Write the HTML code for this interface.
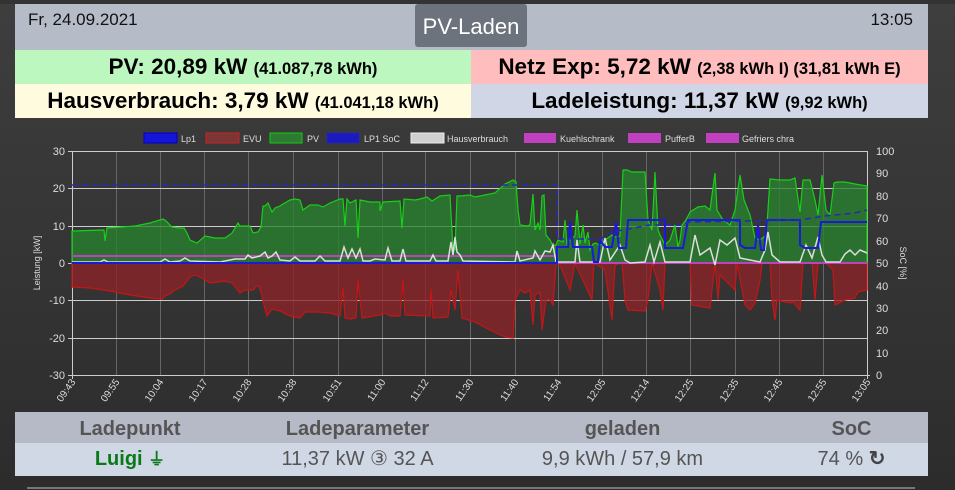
<!DOCTYPE html>
<html><head><meta charset="utf-8"><style>
*{margin:0;padding:0;box-sizing:border-box}
body{width:955px;height:490px;overflow:hidden;background:linear-gradient(#3e3e3e,#2c2c2c);font-family:"Liberation Sans",sans-serif;position:relative}
.top{position:absolute;left:0;top:0;width:955px;height:4px;background:#333}
.hdr{position:absolute;left:15px;top:4px;width:913px;height:46px;background:#b6bbc8}
.date{position:absolute;left:13px;top:6px;font-size:17px;color:#111}
.time{position:absolute;right:15px;top:6px;font-size:17px;color:#111}
.btn{position:absolute;left:400px;top:0;width:112px;height:43px;background:#6c737c;border-radius:3px;color:#fff;font-size:22px;text-align:center;line-height:46px}
.cell{position:absolute;height:34px;text-align:center;font-weight:bold;font-size:22.5px;line-height:34px;color:#000}
.cell small{font-size:16.5px}
.tbl{position:absolute;left:15px;width:913px;display:flex}
.tbl div{text-align:center}
</style></head><body>
<div class="top"></div>
<div class="hdr"><div class="date">Fr, 24.09.2021</div><div class="btn">PV-Laden</div><div class="time">13:05</div></div>
<div class="cell" style="left:15px;top:50px;width:456px;background:#bcf7bf">PV: 20,89 kW <small>(41.087,78 kWh)</small></div>
<div class="cell" style="left:471px;top:50px;width:457px;background:#ffbdbd">Netz Exp: 5,72 kW <small>(2,38 kWh I) (31,81 kWh E)</small></div>
<div class="cell" style="left:15px;top:84px;width:456px;height:34px;background:#fffbdf">Hausverbrauch: 3,79 kW <small>(41.041,18 kWh)</small></div>
<div class="cell" style="left:471px;top:84px;width:457px;height:34px;background:#d0d6e6">Ladeleistung: 11,37 kW <small>(9,92 kWh)</small></div>

<svg style="position:absolute;left:0;top:0" width="955" height="410" font-family="Liberation Sans, sans-serif">
<g font-size="9" fill="#ddd">
<rect x="144" y="133" width="33" height="10" fill="#1515d8" stroke="#00c" />
<text x="181" y="142">Lp1</text>
<rect x="206" y="133" width="33" height="10" fill="#7b3535" stroke="#c22"/>
<text x="243" y="142">EVU</text>
<rect x="270" y="133" width="32" height="10" fill="#2f7a33" stroke="#1c1"/>
<text x="307" y="142">PV</text>
<rect x="327" y="133" width="32" height="10" fill="#1a1ac0" stroke="#22c" stroke-dasharray="4 2"/>
<text x="364" y="142">LP1 SoC</text>
<rect x="411" y="133" width="33" height="10" fill="#d0d0d0" stroke="#eee"/>
<text x="447" y="142">Hausverbrauch</text>
<rect x="524" y="133" width="32" height="10" fill="#c040c0"/>
<text x="560" y="142">Kuehlschrank</text>
<rect x="628" y="133" width="33" height="10" fill="#c040c0"/>
<text x="665" y="142">PufferB</text>
<rect x="706" y="133" width="33" height="10" fill="#c040c0"/>
<text x="742" y="142">Gefriers chra</text>
</g>
<g stroke="#666" stroke-width="1">
<path d="M116.5,151V375M160.5,151V375M204.5,151V375M248.5,151V375M293.5,151V375M338.5,151V375M382.5,151V375M425.5,151V375M470.5,151V375M515.5,151V375M558.5,151V375M602.5,151V375M646.5,151V375M690.5,151V375M735.5,151V375M779.5,151V375M823.5,151V375"/>
</g>
<g stroke="#ccc" stroke-width="1">
<path d="M68,151.5H867M68,188.5H867M68,226.5H867M68,263.5H867M68,300.5H867M68,338.5H867M68,375.5H870M72.5,151V379M867.5,151V379"/>
</g>
<g font-size="11" fill="#ddd" text-anchor="end">
<text x="65" y="155">30</text><text x="65" y="192">20</text><text x="65" y="230">10</text><text x="65" y="267">0</text><text x="65" y="304">-10</text><text x="65" y="342">-20</text><text x="65" y="379">-30</text>
</g>
<g font-size="11" fill="#ddd">
<text x="876" y="155">100</text><text x="876" y="177">90</text><text x="876" y="200">80</text><text x="876" y="222">70</text><text x="876" y="245">60</text><text x="876" y="267">50</text><text x="876" y="290">40</text><text x="876" y="312">30</text><text x="876" y="334">20</text><text x="876" y="357">10</text><text x="876" y="379">0</text>
</g>
<text transform="translate(40,263) rotate(-90)" font-size="9" fill="#ddd" text-anchor="middle">Leistung [kW]</text>
<text transform="translate(900,263) rotate(90)" font-size="9" fill="#ddd" text-anchor="middle">SoC [%]</text>
<g font-size="10" fill="#ddd" text-anchor="end">
<text transform="translate(76,382) rotate(-55)">09:43</text>
<text transform="translate(120,382) rotate(-55)">09:55</text>
<text transform="translate(164,382) rotate(-55)">10:04</text>
<text transform="translate(208,382) rotate(-55)">10:17</text>
<text transform="translate(252,382) rotate(-55)">10:28</text>
<text transform="translate(297,382) rotate(-55)">10:38</text>
<text transform="translate(342,382) rotate(-55)">10:51</text>
<text transform="translate(386,382) rotate(-55)">11:00</text>
<text transform="translate(429,382) rotate(-55)">11:12</text>
<text transform="translate(474,382) rotate(-55)">11:30</text>
<text transform="translate(519,382) rotate(-55)">11:40</text>
<text transform="translate(562,382) rotate(-55)">11:54</text>
<text transform="translate(606,382) rotate(-55)">12:05</text>
<text transform="translate(650,382) rotate(-55)">12:14</text>
<text transform="translate(694,382) rotate(-55)">12:25</text>
<text transform="translate(739,382) rotate(-55)">12:35</text>
<text transform="translate(783,382) rotate(-55)">12:45</text>
<text transform="translate(827,382) rotate(-55)">12:55</text>
<text transform="translate(871,382) rotate(-55)">13:05</text>
</g>
<path fill="rgba(40,130,45,0.78)" stroke="#17d017" stroke-width="1.2" d="M72,231L104,230L105,241L107,228L135,226L150,223L163,219L166,221L172,227L180,228L184,228L187,233L190,240L197,243L205,236L215,238L225,238L232,233L238,223L240,226L250,226L253,233L258,232L261,227L263,206L265,206L268,203L272,212L275,208L280,206L283,204L290,200L295,199L300,200L303,210L310,205L318,205L323,207L330,203L340,199L343,199L345,226L347,199L350,203L356,200L358,238L360,200L370,202L380,202L380,211L383,202L400,201L402,228L404,199L415,200L420,199L427,197L432,201L440,196L450,195L453,250L455,250L457,196L460,196L470,195L475,197L495,193L505,184L513,180L516,182L518,210L520,225L527,226L530,225L533,194L535,230L538,223L540,230L542,196L544,195L546,235L550,240L553,246L556,245L558,240L563,242L565,220L567,245L570,240L575,236L577,210L580,244L583,225L585,243L588,232L590,250L593,244L596,243L600,246L605,240L612,235L615,237L620,236L623,170L627,170L632,172L645,172L648,220L652,230L655,172L658,230L660,235L665,245L670,240L675,225L678,247L680,240L682,225L686,220L690,212L698,207L705,206L710,210L715,173L717,210L723,220L730,225L735,210L740,175L744,200L750,215L755,238L760,240L765,236L767,225L770,179L780,180L790,180L795,178L800,212L803,180L810,180L815,200L818,215L822,175L826,210L830,215L834,183L837,182L845,182L855,184L867,186L867,263L72,263Z"/>
<path fill="rgba(140,35,38,0.78)" stroke="#c41616" stroke-width="1.2" d="M72,263L72,287L90,288L110,291L130,295L150,298L162,299L165,296L170,294L175,290L183,286L190,277L195,275L200,277L210,283L225,281L232,283L240,293L245,290L253,290L257,286L259,286L261,292L264,305L267,316L272,309L280,311L290,316L300,318L305,312L318,312L330,313L340,316L343,288L345,318L350,319L356,318L358,280L362,318L380,315L385,313L390,316L400,316L403,280L405,315L430,316L431,289L433,318L448,317L451,290L455,310L458,270L462,318L475,322L490,330L505,337L513,338L515,300L520,290L525,293L530,290L533,325L535,295L540,292L542,330L546,300L550,300L553,305L556,263L560,265L570,290L575,263L592,300L594,263L605,270L612,320L615,265L622,263L625,300L628,310L645,311L648,300L652,263L660,290L663,310L665,263L690,263L692,305L710,308L715,263L718,300L720,275L735,290L737,263L745,305L750,310L755,303L760,280L762,263L770,263L772,300L775,320L777,300L790,303L793,302L800,310L803,263L812,263L815,300L818,263L826,263L833,270L835,305L845,300L855,298L858,292L867,290L867,263Z"/>
<path fill="none" stroke="#c040c0" stroke-width="2" d="M72,256H557V263H867"/>
<path fill="none" stroke="#ddd" stroke-width="1.5" d="M72,262L100,262L104,260L108,262L160,262L165,259L170,262L180,261L185,258L190,261L220,262L235,259L245,259L248,255L252,258L260,256L265,252L268,258L272,256L276,252L280,260L290,261L295,257L300,261L315,261L320,256L325,261L340,261L344,247L348,258L352,249L356,258L360,249L363,261L370,261L375,259L385,260L388,248L392,261L400,261L403,249L406,261L430,261L433,255L436,261L448,261L451,242L453,255L455,237L457,252L460,255L463,261L515,262L517,251L520,261L533,258L535,251L540,260L545,251L550,252L553,245L556,262L575,262L577,240L580,262L600,262L605,238L610,260L620,245L625,260L630,263L645,262L650,245L654,262L660,242L665,262L690,262L695,235L700,255L710,248L715,265L720,240L727,245L735,238L740,258L750,260L760,262L765,250L768,232L772,255L780,262L800,262L806,245L812,258L818,237L822,255L826,262L840,262L845,254L850,250L855,255L860,250L867,253"/>
<path fill="none" stroke="#1a1ad8" stroke-width="2" d="M72,263H557V247H568L570,222L573,247H592L594,262H598L600,240L605,247H612L616,222L619,248H626L628,220H665V248H683L688,220H740V245L745,248H755L758,225L761,250H764L767,220H800V245L805,248H818L821,222H867"/>
<path fill="none" stroke="#2828b8" stroke-width="1.5" stroke-dasharray="6 4" d="M72,185H557V239L600,239L612,232L650,225L680,225L690,222L800,220L825,216L855,213L867,210"/>
</svg>

<div class="tbl" style="top:412px;height:31px;background:#b5bac6;font-weight:bold;font-size:20px;color:#555;line-height:34px">
<div style="width:230px">Ladepunkt</div><div style="width:225px">Ladeparameter</div><div style="width:305px">geladen</div><div style="width:153px">SoC</div></div>
<div class="tbl" style="top:443px;height:33px;background:#d0d7e5;font-size:20px;color:#555;line-height:33px">
<div style="width:230px;color:#0a7a18;font-weight:bold">Luigi <span style="font-size:17px">⏚</span></div><div style="width:225px">11,37 kW ③ 32 A</div><div style="width:305px">9,9 kWh / 57,9 km</div><div style="width:153px">74 % <b style="color:#444">↻</b></div></div>
<div style="position:absolute;left:27px;top:487px;width:888px;height:2px;background:#777"></div>
</body></html>
